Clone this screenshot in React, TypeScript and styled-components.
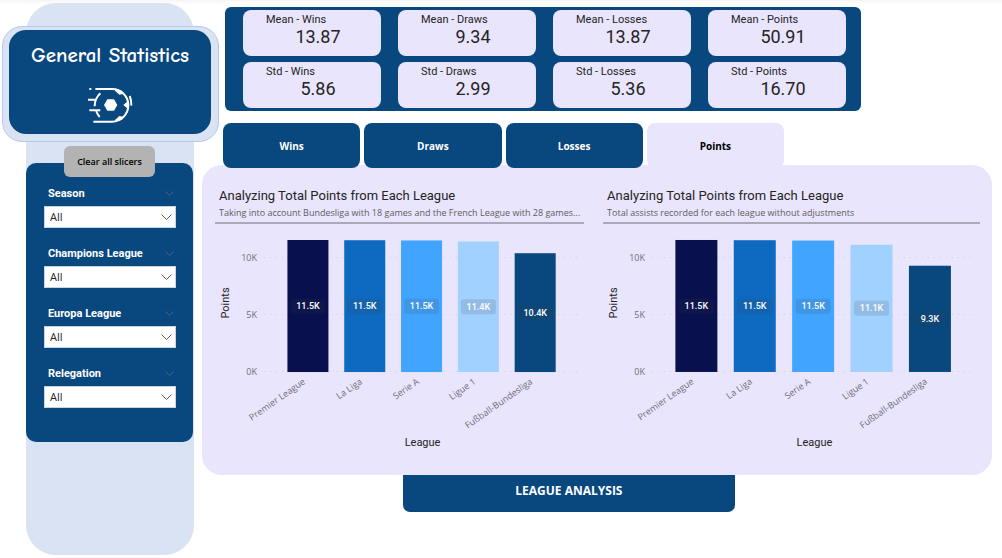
import React from 'react';
import styled, { createGlobalStyle } from 'styled-components';

const navy = '#09477f';
const lavender = '#e9e5fc';
const paleBlue = '#d9e3f3';
const din = `'DIN', Roboto, sans-serif`;
const segoe = `'Segoe UI', 'Open Sans', 'Noto Sans', sans-serif`;

const GlobalStyle = createGlobalStyle`
  * { box-sizing: border-box; }
  body {
    margin: 0;
    background: #fff linear-gradient(#f5f5f5, #fff) 0 0 / 100% 4px no-repeat;
    font-family: ${segoe};
    color: #252423;
  }
  button, select { font-family: inherit; margin: 0; }
`;

const Page = styled.div`
  display: flex;
  align-items: flex-start;
  padding: 3px 10px 3px 2px;
`;

const Sidebar = styled.aside`
  flex: none;
  width: 168px;
  min-height: 552px;
  margin: 0 8px 0 24px;
  padding-top: 23px;
  border-radius: 30px;
  background: ${paleBlue};
`;

const TitleCard = styled.header`
  height: 116px;
  margin: 0 -25px 0 -24px;
  padding: 3px 7px 6px 6px;
  border: 1px solid #b8c9e8;
  border-radius: 20px;
  background: ${paleBlue};
`;

const TitleInner = styled.div`
  display: flex;
  flex-direction: column;
  align-items: center;
  height: 104px;
  padding-top: 11px;
  border-radius: 17px;
  background: ${navy};
  color: #fff;
`;

const Title = styled.h1`
  margin: 0;
  font: 700 21px/28px 'Comic Sans MS', 'Comic Neue', 'Noto Sans', sans-serif;
  white-space: nowrap;
`;

const BallIcon = styled.svg`
  width: 48px;
  height: 38px;
  margin-top: 17px;
`;

const ClearButton = styled.button`
  display: block;
  position: relative;
  width: 91px;
  height: 31px;
  margin: 4px auto -14px 38px;
  padding: 0;
  border: 0;
  border-radius: 6px;
  background: #b3b3b3;
  color: #000;
  font-size: 9px;
  font-weight: 600;
  white-space: nowrap;
`;

const Filters = styled.section`
  display: flex;
  flex-direction: column;
  gap: 18px;
  margin-right: 1px;
  padding: 23px 17px 34px 18px;
  border-radius: 10px;
  background: ${navy};
`;

const Slicer = styled.div`
  display: flex;
  flex-direction: column;
  gap: 4px;
`;

const SlicerHead = styled.label`
  display: flex;
  justify-content: space-between;
  padding: 0 2px 0 4px;
  color: #fff;
  font: 700 11px/16px ${din};
`;

const SelectWrap = styled.div`
  position: relative;
  display: grid;
`;

const Select = styled.select`
  appearance: none;
  height: 22px;
  padding: 0 24px 0 5px;
  border: 1px solid #c8d4e0;
  border-radius: 0;
  background: #fff;
  color: #252423;
  font: 11px/20px ${segoe};
`;

const SelectArrow = styled.svg`
  position: absolute;
  right: 4px;
  top: 8px;
  width: 11px;
  height: 6px;
  pointer-events: none;
`;

const HeadArrow = styled.svg`
  width: 9px;
  height: 5px;
  margin-top: 5px;
`;

const Main = styled.main`
  flex: 1;
  min-width: 0;
  padding-top: 4px;
`;

const Stats = styled.section`
  display: grid;
  grid-template-columns: repeat(4, 1fr);
  gap: 6px 17px;
  margin: 0 131px 12px 23px;
  padding: 3px 15px 3px 18px;
  border-radius: 6px;
  background: ${navy};
`;

const StatCard = styled.div`
  height: 46px;
  padding: 2px 0 0 23px;
  border-radius: 8px;
  background: ${lavender};
`;

const StatLabel = styled.div`
  font: 11px/15px ${din};
`;

const StatValue = styled.div`
  margin-right: 11px;
  text-align: center;
  font: 18px/20px ${din};
`;

const Tabs = styled.nav`
  position: relative;
  display: grid;
  grid-template-columns: repeat(4, 1fr);
  gap: 4px;
  margin: 0 208px -3px 21px;
`;

const Tab = styled.button<{ $active?: boolean }>`
  height: 45px;
  padding: 0;
  border: 0;
  border-radius: 8px;
  background: ${(p) => (p.$active ? lavender : navy)};
  color: ${(p) => (p.$active ? '#000' : '#fff')};
  font-size: 10px;
  font-weight: 700;
`;

const Panel = styled.section`
  display: grid;
  grid-template-columns: 369fr 377fr;
  gap: 19px;
  min-height: 310px;
  padding: 22px 12px 20px 13px;
  border-radius: 20px;
  background: ${lavender};
`;

const ChartHead = styled.header`
  height: 37px;
  padding: 0 4px;
  border-bottom: 2px solid #aca8b9;
`;

const ChartTitle = styled.h2`
  margin: 0;
  font: 400 13px/18px ${din};
`;

const ChartSub = styled.p`
  margin: 0;
  overflow: hidden;
  color: #605e5c;
  font-size: 9px;
  line-height: 16px;
  white-space: nowrap;
  text-overflow: ellipsis;
`;

const Plot = styled.svg`
  display: block;
  width: 100%;
`;

const AxisText = styled.text`
  fill: #6f6d78;
  font: 9px ${segoe};
  text-anchor: end;
`;

const AxisTitle = styled.text`
  fill: #252423;
  font: 11px ${din};
  text-anchor: middle;
`;

const BarText = styled.text`
  fill: #fff;
  font: 500 9px ${din};
  text-anchor: middle;
`;

const AnalysisButton = styled.button`
  display: block;
  width: 42%;
  height: 37px;
  margin-left: 201px;
  padding: 0 0 6px;
  border: 0;
  border-radius: 0 0 7px 7px;
  background: ${navy};
  color: #fff;
  font-size: 12px;
  font-weight: 700;
`;

const leagues = [
  { name: 'Premier League', color: '#08104e' },
  { name: 'La Liga', color: '#0e69c0' },
  { name: 'Serie A', color: '#41a4ff' },
  { name: 'Ligue 1', color: '#a1d1ff' },
  { name: 'Fußball-Bundesliga', color: navy },
];

const filters = ['Season', 'Champions League', 'Europa League', 'Relegation'];

const stats = [
  ['Mean - Wins', '13.87'],
  ['Mean - Draws', '9.34'],
  ['Mean - Losses', '13.87'],
  ['Mean - Points', '50.91'],
  ['Std - Wins', '5.86'],
  ['Std - Draws', '2.99'],
  ['Std - Losses', '5.36'],
  ['Std - Points', '16.70'],
];

const BASE = 148;
const PER_K = 11.4;

type ChartProps = {
  title: string;
  subtitle: string;
  width: number;
  barWidth: number;
  step: number;
  values: number[];
};

function BarChart({ title, subtitle, width, barWidth, step, values }: ChartProps) {
  return (
    <article>
      <ChartHead>
        <ChartTitle>{title}</ChartTitle>
        <ChartSub>{subtitle}</ChartSub>
      </ChartHead>
      <Plot viewBox={`0 0 ${width} 229`} role="img" aria-label={title}>
        {[0, 5, 10].map((k) => (
          <g key={k}>
            <line
              x1={49}
              x2={width - 5}
              y1={BASE - k * PER_K - 0.5}
              y2={BASE - k * PER_K - 0.5}
              stroke="#d0cddd"
              strokeDasharray="1 5"
            />
            <AxisText x={42} y={BASE - k * PER_K + 3}>{k}K</AxisText>
          </g>
        ))}
        {leagues.map((league, i) => {
          const x = 72.4 + i * step;
          const h = values[i] * PER_K;
          const cx = x + barWidth / 2;
          const cy = BASE - h / 2;
          const label = `${(Math.floor(values[i] * 10) / 10).toFixed(1)}K`;
          return (
            <g key={league.name}>
              <rect x={x} y={BASE - h} width={barWidth} height={h} fill={league.color} />
              <rect x={cx - 17.5} y={cy - 7.5} width={35} height={15} rx={3} fill="#404040" fillOpacity={0.14} />
              <BarText x={cx} y={cy + 3}>{label}</BarText>
              <AxisText transform={`translate(${cx - 2} 159) rotate(-35)`}>{league.name}</AxisText>
            </g>
          );
        })}
        <AxisTitle transform="translate(14 79) rotate(-90)">Points</AxisTitle>
        <AxisTitle x={width / 2 + 23} y={222}>League</AxisTitle>
      </Plot>
    </article>
  );
}

export default function App() {
  return (
    <>
      <GlobalStyle />
      <Page>
        <Sidebar>
          <TitleCard>
            <TitleInner>
              <Title>General Statistics</Title>
              <BallIcon viewBox="32 20 144 114" fill="none" stroke="#fff" strokeWidth="6" aria-hidden="true">
                <path d="M42 29h6M60 29h50a49 49 0 0 1 0 98H54" />
                <path d="M75 42q-17 16-17 39M38 61h20M42 93h33M62 93q3 12 11 20M163 50q6 14 5 29" />
                <path d="M96 60h20l10 17-10 17H96l-10-17zM118 27l22 8 6 8-14 3-13-12zM118 129l22-8 6-8-14-3-13 12zM144 77l14-12v24z" fill="#fff" stroke="none" />
              </BallIcon>
            </TitleInner>
          </TitleCard>
          <ClearButton type="button">Clear all slicers</ClearButton>
          <Filters>
            {filters.map((name) => {
              const id = name.toLowerCase().replace(' ', '-');
              return (
                <Slicer key={name}>
                  <SlicerHead htmlFor={id}>
                    {name}
                    <HeadArrow viewBox="0 0 9 5" fill="none" stroke="#4d6480" aria-hidden="true">
                      <path d="M.5.5l4 4 4-4" />
                    </HeadArrow>
                  </SlicerHead>
                  <SelectWrap>
                    <Select id={id} defaultValue="All">
                      <option>All</option>
                    </Select>
                    <SelectArrow viewBox="0 0 11 6" fill="none" stroke="#605e5c" aria-hidden="true">
                      <path d="M.5.5l5 5 5-5" />
                    </SelectArrow>
                  </SelectWrap>
                </Slicer>
              );
            })}
          </Filters>
        </Sidebar>
        <Main>
          <Stats>
            {stats.map(([label, value]) => (
              <StatCard key={label}>
                <StatLabel>{label}</StatLabel>
                <StatValue>{value}</StatValue>
              </StatCard>
            ))}
          </Stats>
          <Tabs>
            <Tab type="button">Wins</Tab>
            <Tab type="button">Draws</Tab>
            <Tab type="button">Losses</Tab>
            <Tab type="button" $active>Points</Tab>
          </Tabs>
          <Panel>
            <BarChart
              title="Analyzing Total Points from Each League"
              subtitle="Taking into account Bundesliga with 18 games and the French League with 28 games..."
              width={369}
              barWidth={41}
              step={56.8}
              values={[11.58, 11.56, 11.54, 11.45, 10.42]}
            />
            <BarChart
              title="Analyzing Total Points from Each League"
              subtitle="Total assists recorded for each league without adjustments"
              width={377}
              barWidth={42}
              step={58.4}
              values={[11.58, 11.56, 11.53, 11.16, 9.32]}
            />
          </Panel>
          <AnalysisButton type="button">LEAGUE ANALYSIS</AnalysisButton>
        </Main>
      </Page>
    </>
  );
}
